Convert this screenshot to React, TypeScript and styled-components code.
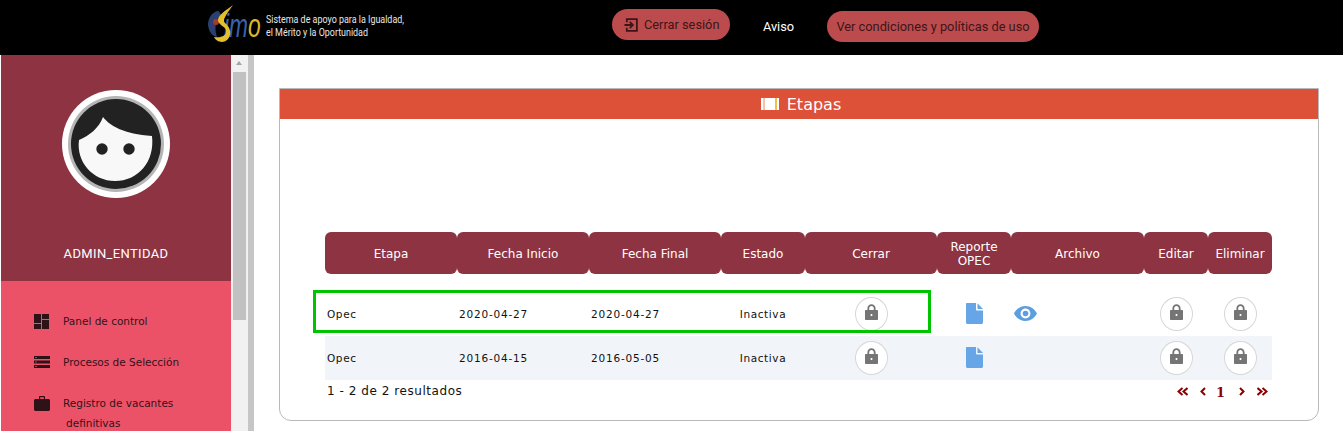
import React from "react";
import styled, { createGlobalStyle } from "styled-components";

const GlobalStyle = createGlobalStyle`
    html, body {
        margin: 0;
        padding: 0;
        background: #fff;
        overflow: hidden;
    }
    * {
        box-sizing: border-box;
    }
`;

const columns = [
    { title: "Etapa", width: 132 },
    { title: "Fecha Inicio", width: 132 },
    { title: "Fecha Final", width: 132 },
    { title: "Estado", width: 84 },
    { title: "Cerrar", width: 132 },
    { title: "Reporte OPEC", width: 74 },
    { title: "Archivo", width: 133 },
    { title: "Editar", width: 64 },
    { title: "Eliminar", width: 64 },
];

const rows = [
    { etapa: "Opec", inicio: "2020-04-27", fin: "2020-04-27", estado: "Inactiva", archivo: true },
    { etapa: "Opec", inicio: "2016-04-15", fin: "2016-05-05", estado: "Inactiva", archivo: false },
];

const LockIcon = () => (
    <svg width="13" height="16" viewBox="0 0 13 16">
        <path
            fill="#757575"
            fillRule="evenodd"
            d="M6.5 0.3C4.2 0.3 2.4 2 2.4 4.4V6H0.7C0.3 6 0 6.3 0 6.7V15.3C0 15.7 0.3 16 0.7 16H12.3C12.7 16 13 15.7 13 15.3V6.7C13 6.3 12.7 6 12.3 6H10.6V4.4C10.6 2 8.8 0.3 6.5 0.3ZM4.2 6V4.4C4.2 3 5.2 2 6.5 2C7.8 2 8.8 3 8.8 4.4V6H4.2ZM6.5 10C7.1 10 7.5 10.4 7.5 11C7.5 11.6 7.1 12 6.5 12C5.9 12 5.5 11.6 5.5 11C5.5 10.4 5.9 10 6.5 10Z"
        />
    </svg>
);

const FileIcon = () => (
    <svg width="17" height="21" viewBox="0 0 17 21">
        <path fill="#66a6e6" d="M1 0H10V6.5C10 7 10.4 7.5 11 7.5H17V19.5C17 20.3 16.3 21 15.5 21H1.5C0.7 21 0 20.3 0 19.5V1C0 0.4 0.4 0 1 0Z" />
        <path fill="#66a6e6" d="M11.5 0.3L17 6H11.5Z" />
    </svg>
);

const EyeIcon = () => (
    <svg width="23" height="15" viewBox="0 0 23 15">
        <path
            fill="#5b9fe0"
            fillRule="evenodd"
            d="M11.5 0C6.5 0 2.3 3 0 7.5C2.3 12 6.5 15 11.5 15C16.5 15 20.7 12 23 7.5C20.7 3 16.5 0 11.5 0ZM11.5 2.6C14.2 2.6 16.4 4.8 16.4 7.5C16.4 10.2 14.2 12.4 11.5 12.4C8.8 12.4 6.6 10.2 6.6 7.5C6.6 4.8 8.8 2.6 11.5 2.6Z"
        />
        <circle cx="11.5" cy="7.5" r="2.8" fill="#5b9fe0" />
    </svg>
);

const LogoutIcon = () => (
    <svg width="14" height="14" viewBox="0 0 15 15">
        <path fill="none" stroke="#3d1518" strokeWidth="1.9" d="M3 4.5V1.2H13.8V13.8H3V10.5" />
        <path fill="none" stroke="#3d1518" strokeWidth="1.9" d="M0.5 7.5H9M6.2 4.2L9.5 7.5L6.2 10.8" />
    </svg>
);

const Logo = () => (
    <svg width="56" height="40" viewBox="0 0 56 40">
        <path fill="#2c3f72" d="M11 6C5 7 1 13 1 20C2 27 5 31 10 32C8 26 7 16 14 10C13 8 12 6 11 6Z" />
        <circle cx="9" cy="17" r="3" fill="#a5392c" />
        <text
            transform="translate(17 32) scale(0.69 1)"
            fontFamily="'Liberation Sans', sans-serif"
            fontStyle="italic"
            fontSize="33"
        >
            <tspan fill="#3a62ad">im</tspan>
            <tspan fill="#d9b82a">o</tspan>
        </text>
        <path fill="#e3c02a" d="M26 0C18 6 11 10 11 15C11 20 18 21 19 25C20 31 14 33 7 32C9 37 17 39 21 34C26 28 22 21 18 18C15 15 19 10 26 0Z" />
    </svg>
);

const DashboardIcon = () => (
    <svg width="15" height="15" viewBox="0 0 15 15">
        <path fill="#2e1218" d="M0 0H7V9H0ZM0 10H7V15H0ZM8 0H15V5H8ZM8 6H15V15H8Z" />
    </svg>
);

const ServersIcon = () => (
    <svg width="16" height="12" viewBox="0 0 16 12">
        <path fill="#2e1218" d="M0 0H16V3H0ZM0 4.5H16V7.5H0ZM0 9H16V12H0Z" />
        <path fill="#8a4a55" d="M1 1H3V2H1ZM1 5.5H3V6.5H1ZM1 10H3V11H1Z" />
    </svg>
);

const BriefcaseIcon = () => (
    <svg width="16" height="15" viewBox="0 0 16 15">
        <path
            fill="#2e1218"
            fillRule="evenodd"
            d="M5 3V1C5 0.4 5.4 0 6 0H10C10.6 0 11 0.4 11 1V3H14.5C15.3 3 16 3.7 16 4.5V13.5C16 14.3 15.3 15 14.5 15H1.5C0.7 15 0 14.3 0 13.5V4.5C0 3.7 0.7 3 1.5 3ZM6.2 3H9.8V1.2H6.2Z"
        />
    </svg>
);

const Avatar = () => (
    <svg width="108" height="108" viewBox="0 0 108 108">
        <circle cx="54" cy="54" r="54" fill="#fff" />
        <circle cx="54" cy="54" r="48" fill="#b5b5b5" />
        <circle cx="54" cy="54" r="45" fill="#222" />
        <path
            fill="#f8f8f8"
            d="M17 50C27 46 37 38 41 27C48 36 62 44 90 46C93 72 76 91 53 91C31 91 14 72 17 50Z"
        />
        <circle cx="40" cy="59" r="5.7" fill="#222" />
        <circle cx="67" cy="59" r="5.7" fill="#222" />
    </svg>
);

const Chevrons = ({ dir, double }: { dir: "left" | "right"; double?: boolean }) => {
    const d = double ? "M5.5 1L1.5 4.5L5.5 8M10.5 1L6.5 4.5L10.5 8" : "M5 1L1.5 4.5L5 8";
    return (
        <svg
            width={double ? 11 : 6}
            height="9"
            viewBox={double ? "0 0 11 9" : "0 0 6 9"}
            style={dir === "right" ? { transform: "scaleX(-1)" } : undefined}
        >
            <path fill="none" stroke="#8b0000" strokeWidth="2" d={d} />
        </svg>
    );
};

const App = () => {
    return (
        <Page>
            <GlobalStyle />
            <TopBar>
                <Brand>
                    <Logo />
                    <BrandText>
                        Sistema de apoyo para la Igualdad,
                        <br />
                        el Mérito y la Oportunidad
                    </BrandText>
                </Brand>
                <LogoutButton>
                    <LogoutIcon />
                    Cerrar sesión
                </LogoutButton>
                <Notice>Aviso</Notice>
                <TermsButton>Ver condiciones y políticas de uso</TermsButton>
            </TopBar>
            <Body>
                <Sidebar>
                    <Profile>
                        <Avatar />
                        <UserName>ADMIN_ENTIDAD</UserName>
                    </Profile>
                    <Menu>
                        <MenuItem>
                            <MenuIcon><DashboardIcon /></MenuIcon>
                            <span>Panel de control</span>
                        </MenuItem>
                        <MenuItem>
                            <MenuIcon><ServersIcon /></MenuIcon>
                            <span>Procesos de Selección</span>
                        </MenuItem>
                        <MenuItem>
                            <MenuIcon><BriefcaseIcon /></MenuIcon>
                            <span>
                                Registro de vacantes
                                <br />
                                <Indent>definitivas</Indent>
                            </span>
                        </MenuItem>
                    </Menu>
                </Sidebar>
                <ScrollTrack>
                    <ScrollArrow />
                    <ScrollThumb />
                </ScrollTrack>
                <Gutter />
                <Content>
                    <Card>
                        <CardHeader>
                            <StageIcon />
                            Etapas
                        </CardHeader>
                        <TableWrap>
                            <Highlight />
                            <Table>
                                <colgroup>
                                    {columns.map((c) => (
                                        <col key={c.title} style={{ width: c.width }} />
                                    ))}
                                </colgroup>
                                <thead>
                                    <tr>
                                        {columns.map((c) => (
                                            <Th key={c.title}>{c.title}</Th>
                                        ))}
                                    </tr>
                                </thead>
                                <tbody>
                                    <SpacerRow><td colSpan={9} /></SpacerRow>
                                    {rows.map((row, i) => (
                                        <Row key={i} $striped={i % 2 === 1}>
                                            <Td>{row.etapa}</Td>
                                            <Td $date>{row.inicio}</Td>
                                            <Td $date>{row.fin}</Td>
                                            <Td $center>{row.estado}</Td>
                                            <Td $center><LockButton><LockIcon /></LockButton></Td>
                                            <Td $center><FileIcon /></Td>
                                            <Td>
                                                {row.archivo && <EyeWrap><EyeIcon /></EyeWrap>}
                                            </Td>
                                            <Td $center><LockButton><LockIcon /></LockButton></Td>
                                            <Td $center><LockButton><LockIcon /></LockButton></Td>
                                        </Row>
                                    ))}
                                </tbody>
                            </Table>
                            <Footer>
                                <Results>1 - 2 de 2 resultados</Results>
                                <Pager>
                                    <Chevrons dir="left" double />
                                    <Chevrons dir="left" />
                                    <strong>1</strong>
                                    <Chevrons dir="right" />
                                    <Chevrons dir="right" double />
                                </Pager>
                            </Footer>
                        </TableWrap>
                    </Card>
                </Content>
            </Body>
        </Page>
    );
};

export default App;

const Page = styled.div`
    width: 1343px;
    height: 431px;
    overflow: hidden;
    display: flex;
    flex-direction: column;
`;

const TopBar = styled.header`
    height: 55px;
    flex: none;
    background: #000;
    display: flex;
    align-items: flex-start;
    padding-left: 207px;
`;

const Brand = styled.div`
    width: 405px;
    display: flex;
    align-items: center;
    gap: 3px;
    height: 50px;
`;

const BrandText = styled.div`
    font-family: "Roboto", "Liberation Sans", sans-serif;
    font-size: 10.5px;
    line-height: 13px;
    color: #e8e8e8;
    padding-top: 2px;
    transform: scaleX(0.85);
    transform-origin: left center;
    white-space: nowrap;
`;

const PillButton = styled.div`
    height: 31px;
    background: #bc4b4e;
    border-radius: 16px;
    display: flex;
    align-items: center;
    color: #3d1518;
    font-family: "Roboto", "Liberation Sans", sans-serif;
    font-size: 12.8px;
    white-space: nowrap;
`;

const LogoutButton = styled(PillButton)`
    width: 118px;
    margin-top: 9px;
    padding-left: 12px;
    gap: 6px;
`;

const Notice = styled.div`
    width: 97px;
    margin-top: 11px;
    height: 31px;
    display: flex;
    align-items: center;
    justify-content: center;
    color: #fff;
    font-family: "Roboto", "Liberation Sans", sans-serif;
    font-size: 12.8px;
`;

const TermsButton = styled(PillButton)`
    width: 212px;
    margin-top: 11px;
    justify-content: center;
`;

const Body = styled.div`
    flex: 1;
    min-height: 0;
    display: flex;
`;

const Sidebar = styled.aside`
    width: 230px;
    flex: none;
    margin-left: 1px;
    background: #ec5267;
`;

const Profile = styled.div`
    height: 226px;
    background: #8e3341;
    display: flex;
    flex-direction: column;
    align-items: center;
    padding-top: 35px;
`;

const UserName = styled.div`
    margin-top: 48px;
    color: #fff;
    font-family: "Roboto", "Liberation Sans", sans-serif;
    font-size: 13px;
    letter-spacing: 0.35px;
`;

const Menu = styled.nav`
    padding: 30px 0 0 33px;
    display: flex;
    flex-direction: column;
    gap: 21px;
`;

const MenuItem = styled.div`
    display: flex;
    font-family: "DejaVu Sans", sans-serif;
    font-size: 10.5px;
    line-height: 20px;
    color: #33121a;
`;

const MenuIcon = styled.span`
    width: 29px;
    flex: none;
    display: flex;
    align-items: center;
    height: 20px;
`;

const Indent = styled.span`
    margin-left: 3px;
`;

const ScrollTrack = styled.div`
    width: 17px;
    flex: none;
    background: #f1f1f1;
    padding: 0 2px;
`;

const ScrollArrow = styled.div`
    height: 17px;
    position: relative;
    &::before {
        content: "";
        position: absolute;
        left: 3px;
        top: 6px;
        border-left: 3.5px solid transparent;
        border-right: 3.5px solid transparent;
        border-bottom: 4px solid #a3a3a3;
    }
`;

const ScrollThumb = styled.div`
    height: 248px;
    background: #c1c1c1;
`;

const Gutter = styled.div`
    width: 6px;
    flex: none;
    background: #c6c6c6;
`;

const Content = styled.main`
    flex: 1;
    min-width: 0;
    padding: 33px 0 0 25px;
`;

const Card = styled.section`
    width: 1040px;
    height: 333px;
    border: 1px solid #b9b9b9;
    border-radius: 0 0 12px 12px;
    background: #fff;
`;

const CardHeader = styled.div`
    height: 30px;
    background: #dd5138;
    display: flex;
    align-items: center;
    justify-content: center;
    gap: 8px;
    padding-left: 4px;
    color: #fff;
    font-family: "DejaVu Sans", sans-serif;
    font-size: 16px;
`;

const StageIcon = styled.span`
    width: 18px;
    height: 12px;
    background: linear-gradient(
        90deg,
        #fff 0 2px,
        #f6c2a8 2px 4px,
        #fff 4px 14px,
        #f2c04a 14px 16px,
        #fff 16px
    );
`;

const TableWrap = styled.div`
    position: relative;
    margin: 113px 0 0 45px;
    width: 947px;
`;

const Highlight = styled.div`
    position: absolute;
    left: -12px;
    top: 58px;
    width: 618px;
    height: 43px;
    border: 3px solid #00c400;
    pointer-events: none;
`;

const Table = styled.table`
    border-collapse: separate;
    border-spacing: 0;
    table-layout: fixed;
    width: 947px;
    font-family: "DejaVu Sans", sans-serif;
`;

const Th = styled.th`
    height: 42px;
    padding: 1px 4px 0;
    background: #8e3341;
    border-radius: 6px;
    color: #fff;
    font-size: 12px;
    font-weight: 400;
    line-height: 14px;
    text-align: center;
`;

const SpacerRow = styled.tr`
    height: 18px;
`;

const Row = styled.tr<{ $striped: boolean }>`
    height: 44px;
    background: ${(p) => (p.$striped ? "#f1f4f9" : "#fff")};
`;

const Td = styled.td<{ $center?: boolean; $date?: boolean }>`
    padding: 0 ${(p) => (p.$center ? 0 : 2)}px;
    font-size: 10.5px;
    letter-spacing: ${(p) => (p.$date ? 0.8 : 0.6)}px;
    color: #111;
    text-align: ${(p) => (p.$center ? "center" : "left")};
    vertical-align: middle;
`;

const LockButton = styled.span`
    width: 33px;
    height: 34px;
    margin-left: 1px;
    border: 1px solid #d6d6d6;
    border-radius: 50%;
    background: #fff;
    display: inline-flex;
    align-items: center;
    justify-content: center;
    padding-bottom: 4px;
    vertical-align: middle;
`;

const EyeWrap = styled.span`
    display: inline-block;
    line-height: 0;
    margin-left: 1px;
`;

const Footer = styled.div`
    display: flex;
    justify-content: space-between;
    align-items: center;
    height: 22px;
`;

const Results = styled.div`
    font-size: 12px;
    font-family: "DejaVu Sans", sans-serif;
    letter-spacing: 0.55px;
    color: #111;
    padding-left: 2px;
`;

const Pager = styled.div`
    display: flex;
    align-items: center;
    gap: 12px;
    padding-right: 4px;
    color: #8b0000;
    strong {
        width: 8px;
        margin: 3px 3px 0 -2px;
        font-family: "DejaVu Serif", serif;
        font-size: 13px;
        line-height: 14px;
    }
`;
